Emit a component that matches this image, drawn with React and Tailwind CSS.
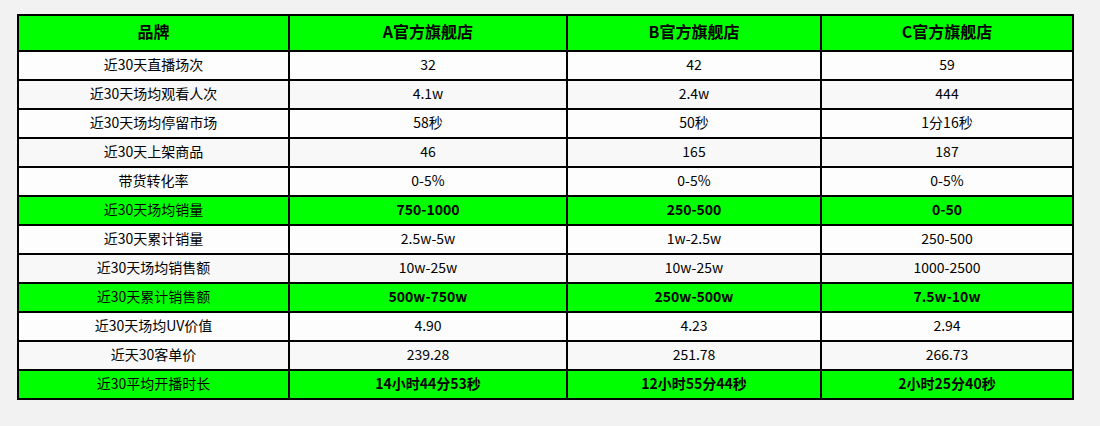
import React from "react";

const stores = ["A官方旗舰店", "B官方旗舰店", "C官方旗舰店"];

// bg: "w" white, "g" light gray, "hl" highlighted green with bold values
const rows = [
  { label: "近30天直播场次", values: ["32", "42", "59"], bg: "w" },
  { label: "近30天场均观看人次", values: ["4.1w", "2.4w", "444"], bg: "g" },
  { label: "近30天场均停留市场", values: ["58秒", "50秒", "1分16秒"], bg: "w" },
  { label: "近30天上架商品", values: ["46", "165", "187"], bg: "g" },
  { label: "带货转化率", values: ["0-5%", "0-5%", "0-5%"], bg: "w" },
  { label: "近30天场均销量", values: ["750-1000", "250-500", "0-50"], bg: "hl" },
  { label: "近30天累计销量", values: ["2.5w-5w", "1w-2.5w", "250-500"], bg: "w" },
  { label: "近30天场均销售额", values: ["10w-25w", "10w-25w", "1000-2500"], bg: "g" },
  { label: "近30天累计销售额", values: ["500w-750w", "250w-500w", "7.5w-10w"], bg: "hl" },
  { label: "近30天场均UV价值", values: ["4.90", "4.23", "2.94"], bg: "w" },
  { label: "近天30客单价", values: ["239.28", "251.78", "266.73"], bg: "g" },
  { label: "近30平均开播时长", values: ["14小时44分53秒", "12小时55分44秒", "2小时25分40秒"], bg: "hl" },
];

const rowBg = {
  w: "bg-[#fdfdfd]",
  g: "bg-[#f8f8f8]",
  hl: "bg-[#00ff00]",
};

const App = () => {
  return (
    <div
      className="w-[1100px] h-[426px] bg-[#f2f2f2] pl-[17px] pt-[14px]"
      style={{ fontFamily: '"Noto Sans CJK SC", "Noto Sans", sans-serif' }}
    >
      <table className="table-fixed border-collapse w-[1055px] text-[14px] text-black">
        <colgroup>
          <col className="w-[271px]" />
          <col className="w-[278px]" />
          <col className="w-[254px]" />
          <col className="w-[252px]" />
        </colgroup>
        <thead>
          <tr className="h-[36px] bg-[#00ff00]">
            <th className="border-2 border-black text-[16px] font-bold p-0 pb-[4px] leading-none">品牌</th>
            {stores.map((s) => (
              <th key={s} className="border-2 border-black text-[16px] font-bold p-0 pb-[4px] leading-none">
                {s}
              </th>
            ))}
          </tr>
        </thead>
        <tbody>
          {rows.map((row, i) => (
            <tr key={i} className={`h-[29px] ${rowBg[row.bg]}`}>
              <td className="border-2 border-black text-center p-0 pb-[4px] leading-none">{row.label}</td>
              {row.values.map((v, j) => (
                <td
                  key={j}
                  className={`border-2 border-black text-center p-0 pb-[4px] leading-none ${
                    row.bg === "hl" ? "font-bold" : ""
                  }`}
                >
                  {v}
                </td>
              ))}
            </tr>
          ))}
        </tbody>
      </table>
    </div>
  );
};

export default App;
